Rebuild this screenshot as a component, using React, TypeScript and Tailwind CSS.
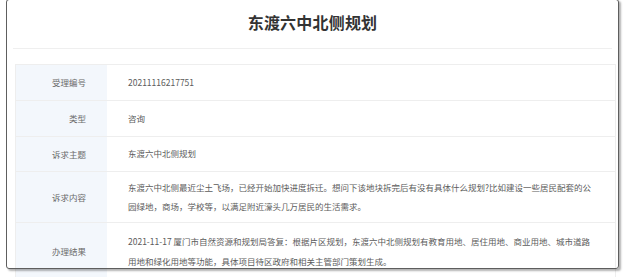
import React from 'react';

const rows: { label: string; value: string }[] = [
  { label: '受理编号', value: '20211116217751' },
  { label: '类型', value: '咨询' },
  { label: '诉求主题', value: '东渡六中北侧规划' },
  {
    label: '诉求内容',
    value:
      '东渡六中北侧最近尘土飞场，已经开始加快进度拆迁。想问下该地块拆完后有没有具体什么规划?比如建设一些居民配套的公园绿地，商场，学校等，以满足附近濠头几万居民的生活需求。',
  },
  {
    label: '办理结果',
    value:
      '2021-11-17 厦门市自然资源和规划局答复：根据片区规划，东渡六中北侧规划有教育用地、居住用地、商业用地、城市道路用地和绿化用地等功能，具体项目待区政府和相关主管部门策划生成。',
  },
];

const heights = ['h-[35px]', 'h-[36px]', 'h-[35px]', 'h-[51px]', 'h-[58px]'];

export default function App() {
  return (
    <div
      className="relative h-[277px] w-[625px] overflow-hidden bg-white"
      style={{ fontFamily: '"Noto Sans CJK SC", "Noto Sans", sans-serif' }}
    >
      {/* Title */}
      <div className="mx-[13px] flex h-[49px] items-center justify-center border-b border-[#efefef] pb-[5px]">
        <h1 className="text-[16px] font-bold tracking-[0.2px] text-[#333]">东渡六中北侧规划</h1>
      </div>

      {/* Detail table */}
      <div className="ml-[15px] mt-[15px] w-[601px] border border-[#eeeeee]">
        {rows.map((row, i) => (
          <div
            key={row.label}
            className={`flex ${heights[i]} ${i > 0 ? 'border-t border-[#eeeeee]' : ''}`}
          >
            <div className="flex w-[91px] shrink-0 items-center justify-end bg-[#f3f7fc] pr-[21px] text-[8.5px] text-[#6a6a6a]">
              {row.label}
            </div>
            <div className="flex flex-1 items-center pl-[21px] pr-[18px] text-[8.5px] leading-[19.5px] text-[#5c5c5c]">
              <p className="w-[468px]">{row.value}</p>
            </div>
          </div>
        ))}
      </div>

      {/* Screenshot frame overlay */}
      <div className="pointer-events-none absolute left-[6px] top-[-1px] h-[270px] w-[613px] rounded-[3px] border-[1.5px] border-[#5e5e5e] shadow-[2px_2px_2px_rgba(0,0,0,0.3)]" />
    </div>
  );
}
